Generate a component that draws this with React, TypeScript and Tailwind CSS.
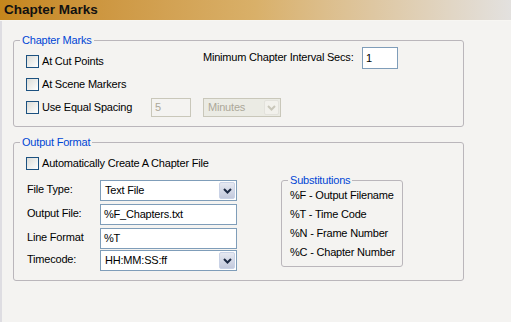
import React from 'react'

const Checkbox = ({ label }: { label: string }) => (
    <div className="flex items-center h-[13px]">
        <span className="w-[13px] h-[13px] border border-[#1c5180] bg-gradient-to-br from-[#dcdcd7] to-white shrink-0" />
        <span className="ml-[3px] whitespace-nowrap">{label}</span>
    </div>
)

const Chevron = ({ color }: { color: string }) => (
    <svg width="9" height="6" viewBox="0 0 9 6">
        <path d="M1 1 L4.5 4.5 L8 1" fill="none" stroke={color} strokeWidth="2" />
    </svg>
)

const Select = ({ value, width, disabled }: { value: string; width: string; disabled?: boolean }) => (
    <div
        className={
            disabled
                ? `flex items-center ${width} h-[19px] border border-[#c9c7ba] bg-[#ebebe4] text-[#aca899]`
                : `flex items-center ${width} h-[21px] border border-[#7f9db9] bg-white`
        }
    >
        <span className="flex-1 pl-[4px] whitespace-nowrap overflow-hidden">{value}</span>
        <span
            className={
                disabled
                    ? 'flex items-center justify-center w-[15px] h-[15px] mr-[1px] rounded-[2px] border border-[#e3e2dc] bg-[#f2f1ec]'
                    : 'flex items-center justify-center w-[16px] h-[17px] mr-[1px] rounded-[2px] border border-[#c9d2e6] bg-gradient-to-b from-[#e6e9f2] to-[#c3c9dc]'
            }
        >
            <Chevron color={disabled ? '#c9c7ba' : '#1d2a44'} />
        </span>
    </div>
)

const TextInput = ({ value }: { value: string }) => (
    <div className="flex items-center w-[137px] h-[21px] border border-[#7f9db9] bg-white pl-[3px]">
        {value}
    </div>
)

const GroupBox = ({ title, className, children }: { title: string; className: string; children: React.ReactNode }) => (
    <div className={`relative border border-[#bab6bb] rounded-[3px] ${className}`}>
        <span className="absolute -top-[8px] left-[6px] px-[2px] bg-[#f4f3f1] text-[#0046d5] leading-[14px]">{title}</span>
        {children}
    </div>
)

const FormRow = ({ label, children, className = '' }: { label: string; children: React.ReactNode; className?: string }) => (
    <div className={`flex items-center ${className}`}>
        <span className="w-[73px] -mt-[2px]">{label}</span>
        {children}
    </div>
)

export default function App() {
    return (
        <div className="w-[511px] h-[322px] overflow-hidden flex flex-col font-['Liberation_Sans',Arial,sans-serif] text-[11px] tracking-[-0.2px] text-black">
            <div className="h-[21px] shrink-0 bg-gradient-to-r from-[#c5861c] via-[#d9b069] to-[#e3e1df] flex items-center pl-[4px] border-b border-[#f7f6f3]">
                <span className="font-bold text-[13.5px] tracking-normal text-[#111]">Chapter Marks</span>
            </div>
            <div className="flex-1 bg-[#f4f3f1] border-l-2 border-[#dedde2] pl-[11px]">
                <GroupBox title="Chapter Marks" className="mt-[19px] w-[451px] h-[87px] pl-[12px] pt-[6px]">
                    <div className="flex items-start h-[22px]">
                        <div className="w-[177px] mt-[8px]">
                            <Checkbox label="At Cut Points" />
                        </div>
                        <span className="w-[159px] self-center -mt-[1px] whitespace-nowrap">Minimum Chapter Interval Secs:</span>
                        <div className="flex items-center w-[36px] h-[22px] border border-[#7f9db9] bg-white pl-[3px]">1</div>
                    </div>
                    <div className="mt-[9px]">
                        <Checkbox label="At Scene Markers" />
                    </div>
                    <div className="flex items-center h-[19px] mt-[7px]">
                        <div className="w-[125px]">
                            <Checkbox label="Use Equal Spacing" />
                        </div>
                        <div className="flex items-center w-[40px] h-[19px] border border-[#c9c7ba] text-[#aca899] pl-[3px]">5</div>
                        <div className="ml-[12px]">
                            <Select value="Minutes" width="w-[78px]" disabled />
                        </div>
                    </div>
                </GroupBox>
                <GroupBox title="Output Format" className="mt-[15px] w-[451px] h-[139px] pl-[12px] pt-[14px]">
                    <Checkbox label="Automatically Create A Chapter File" />
                    <div className="flex items-start mt-[10px] pl-[1px]">
                        <div className="flex flex-col">
                            <FormRow label="File Type:">
                                <Select value="Text File" width="w-[137px]" />
                            </FormRow>
                            <FormRow label="Output File:" className="mt-[3px]">
                                <TextInput value="%F_Chapters.txt" />
                            </FormRow>
                            <FormRow label="Line Format" className="mt-[3px]">
                                <TextInput value="%T" />
                            </FormRow>
                            <FormRow label="Timecode:" className="mt-[1px]">
                                <Select value="HH:MM:SS:ff" width="w-[137px]" />
                            </FormRow>
                        </div>
                        <GroupBox title="Substitutions" className="ml-[44px] w-[122px] h-[87px] pl-[8px] pt-[5px]">
                            <div className="flex flex-col leading-[19px]">
                                <span>%F - Output Filename</span>
                                <span>%T - Time Code</span>
                                <span>%N - Frame Number</span>
                                <span>%C - Chapter Number</span>
                            </div>
                        </GroupBox>
                    </div>
                </GroupBox>
            </div>
        </div>
    )
}
